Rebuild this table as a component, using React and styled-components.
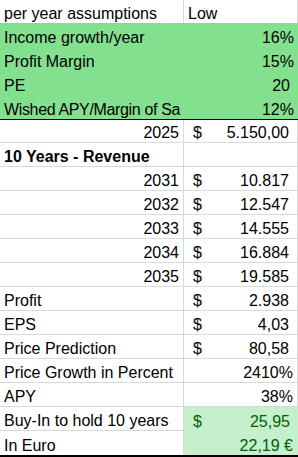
import React from "react";
import styled, { createGlobalStyle } from "styled-components";

const GRID = "#d9d9d9";
const GREEN = "#83e08f";
const GOOD_BG = "#c6efce";
const GOOD_TEXT = "#006100";

const GlobalStyle = createGlobalStyle`
  html, body {
    margin: 0;
    padding: 0;
    background: #ffffff;
  }
  body {
    font-family: "Liberation Sans", Arial, sans-serif;
    font-size: 16px;
    color: #000000;
  }
`;

// the sheet cuts the label off at the column edge, so only "Sa" of "Safety" shows
const rows = [
  { label: "per year assumptions", value: "Low", kind: "text", h: 23, fill: "none", line: false },
  { label: "Income growth/year", value: "16%", kind: "pct", h: 24, fill: "green" },
  { label: "Profit Margin", value: "15%", kind: "pct", h: 24, fill: "green" },
  { label: "PE", value: "20", kind: "num", h: 24, fill: "green" },
  { label: "Wished APY/Margin of Sa", value: "12%", kind: "pct", h: 25, fill: "green", rule: "thin", squeeze: true },
  { label: "2025", labelRight: true, value: "5.150,00", kind: "usd", h: 23 },
  { label: "10 Years - Revenue", bold: true, value: "", kind: "text", h: 24 },
  { label: "2031", labelRight: true, value: "10.817", kind: "usd", h: 24 },
  { label: "2032", labelRight: true, value: "12.547", kind: "usd", h: 24 },
  { label: "2033", labelRight: true, value: "14.555", kind: "usd", h: 24 },
  { label: "2034", labelRight: true, value: "16.884", kind: "usd", h: 24 },
  { label: "2035", labelRight: true, value: "19.585", kind: "usd", h: 24 },
  { label: "Profit", value: "2.938", kind: "usd", h: 24 },
  { label: "EPS", value: "4,03", kind: "usd", h: 24 },
  { label: "Price Prediction", value: "80,58", kind: "usd", h: 24 },
  { label: "Price Growth in Percent", value: "2410%", kind: "pct", h: 24 },
  { label: "APY", value: "38%", kind: "pct", h: 24 },
  { label: "Buy-In to hold 10 years", value: "25,95", kind: "usd", h: 24, valueFill: "good" },
  { label: "In Euro", value: "22,19 €", kind: "eur", h: 26, valueFill: "good", rule: "thick" },
];

const fills = { none: "transparent", green: GREEN, good: GOOD_BG };

const App = () => {
  return (
    <>
      <GlobalStyle />
      <Sheet>
        {rows.map((r, i) => {
          const rowFill = r.fill || "none";
          const valueFill = r.valueFill || rowFill;
          const ruled = Boolean(r.rule);
          const leftLine = rowFill === "none" && !ruled && r.line !== false;
          const rightLine = valueFill === "none" && !ruled && r.line !== false;
          return (
            <Row key={i} $h={r.h} $rule={r.rule}>
              <Cell
                $fill={rowFill}
                $right={rowFill === "none"}
                $bottom={leftLine}
                $align={r.labelRight ? "flex-end" : "flex-start"}
                $bold={r.bold}
                $squeeze={r.squeeze}
              >
                <span>{r.label}</span>
              </Cell>
              <ValueCell
                r={r}
                fill={valueFill}
                right={valueFill === "none"}
                bottom={rightLine}
              />
            </Row>
          );
        })}
      </Sheet>
    </>
  );
};

const ValueCell = ({ r, fill, right, bottom }) => {
  const good = fill === "good";
  if (r.kind === "usd") {
    return (
      <Cell $fill={fill} $right={right} $bottom={bottom} $good={good} $align="space-between" $pl={9} $pr={8}>
        <span>$</span>
        <span>{r.value}</span>
      </Cell>
    );
  }
  if (r.kind === "text") {
    return (
      <Cell $fill={fill} $right={right} $bottom={bottom} $align="flex-start" $pl={4}>
        <span>{r.value}</span>
      </Cell>
    );
  }
  const pr = r.kind === "pct" ? 4 : r.kind === "eur" ? 5 : 8;
  return (
    <Cell $fill={fill} $right={right} $bottom={bottom} $good={good} $align="flex-end" $pr={pr}>
      <span>{r.value}</span>
    </Cell>
  );
};

const Sheet = styled.div`
  width: 298px;
  display: flex;
  flex-direction: column;
`;

const Row = styled.div`
  display: grid;
  grid-template-columns: 184px 114px;
  height: ${(p) => p.$h}px;
  box-sizing: border-box;
  border-bottom: ${(p) =>
    p.$rule === "thick" ? "2px solid #000" : p.$rule === "thin" ? "1px solid #000" : "none"};
`;

const Cell = styled.div`
  box-sizing: border-box;
  height: 100%;
  display: flex;
  align-items: flex-end;
  justify-content: ${(p) => p.$align};
  padding: 0 ${(p) => (p.$pr != null ? p.$pr : 4)}px 0 ${(p) => (p.$pl != null ? p.$pl : 4)}px;
  background: ${(p) => fills[p.$fill] || "transparent"};
  border-right: ${(p) => (p.$right ? `1px solid ${GRID}` : "none")};
  border-bottom: ${(p) => (p.$bottom ? `1px solid ${GRID}` : "none")};
  color: ${(p) => (p.$good ? GOOD_TEXT : "#000")};
  font-weight: ${(p) => (p.$bold ? 700 : 400)};
  letter-spacing: ${(p) => (p.$squeeze ? "-0.35px" : "normal")};
  line-height: 18px;
  white-space: nowrap;
`;

export default App;
